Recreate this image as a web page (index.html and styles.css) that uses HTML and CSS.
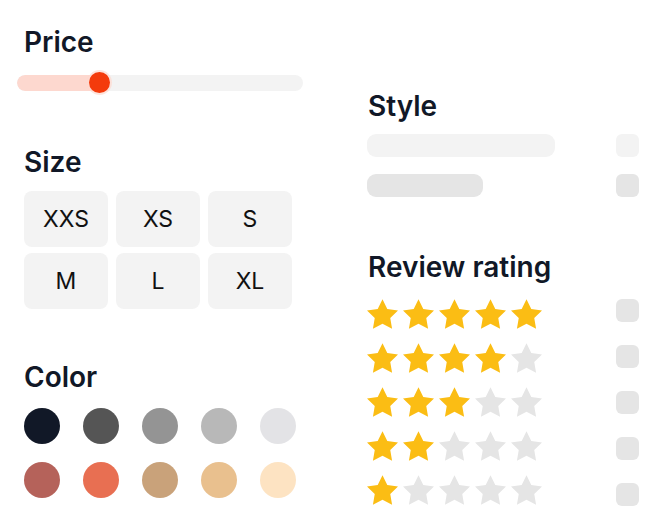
FILE: index.html
```html
<!DOCTYPE html>
<html>
<head>
<meta charset="utf-8">
<link rel="stylesheet" href="styles.css">
</head>
<body>
<div class="page">
  <div class="col left">
    <section class="sec price">
      <h2 class="title">Price</h2>
      <div class="slider">
        <div class="track"><div class="fill" style="width:82px"></div></div>
        <div class="thumb" style="left:72px"></div>
      </div>
    </section>
    <section class="sec size">
      <h2 class="title">Size</h2>
      <div class="sizes">
        <div class="size-btn">XXS</div>
        <div class="size-btn">XS</div>
        <div class="size-btn">S</div>
        <div class="size-btn">M</div>
        <div class="size-btn">L</div>
        <div class="size-btn">XL</div>
      </div>
    </section>
    <section class="sec color">
      <h2 class="title">Color</h2>
      <div class="swatches">
        <span class="sw c1"></span><span class="sw c2"></span><span class="sw c3"></span><span class="sw c4"></span><span class="sw c5"></span>
        <span class="sw c6"></span><span class="sw c7"></span><span class="sw c8"></span><span class="sw c9"></span><span class="sw c10"></span>
      </div>
    </section>
  </div>
  <div class="col right">
    <section class="sec style">
      <h2 class="title">Style</h2>
      <div class="opt-row"><span class="bar bar-long light"></span><span class="box light"></span></div>
      <div class="opt-row"><span class="bar bar-short"></span><span class="box"></span></div>
    </section>
    <section class="sec review">
      <h2 class="title">Review rating</h2>
      <div class="ratings">
        <div class="stars-col">
          <div class="stars" data-n="5">
            <svg class="star on" viewBox="2 2 20 19"><path d="M12 2l3.09 6.26L22 9.27l-5 4.87 1.18 6.88L12 17.770l-6.18 3.25L7 14.14 2 9.27l6.91-1.01L12 2z"/></svg>
            <svg class="star on" viewBox="2 2 20 19"><path d="M12 2l3.09 6.26L22 9.27l-5 4.87 1.18 6.88L12 17.77l-6.18 3.25L7 14.14 2 9.27l6.91-1.01L12 2z"/></svg>
            <svg class="star on" viewBox="2 2 20 19"><path d="M12 2l3.09 6.26L22 9.27l-5 4.87 1.18 6.88L12 17.77l-6.18 3.25L7 14.14 2 9.27l6.91-1.01L12 2z"/></svg>
            <svg class="star on" viewBox="2 2 20 19"><path d="M12 2l3.09 6.26L22 9.27l-5 4.87 1.18 6.88L12 17.77l-6.18 3.25L7 14.14 2 9.27l6.91-1.01L12 2z"/></svg>
            <svg class="star on" viewBox="2 2 20 19"><path d="M12 2l3.09 6.26L22 9.27l-5 4.87 1.18 6.88L12 17.77l-6.18 3.25L7 14.14 2 9.27l6.91-1.01L12 2z"/></svg>
          </div>
          <div class="stars">
            <svg class="star on" viewBox="2 2 20 19"><path d="M12 2l3.09 6.26L22 9.27l-5 4.87 1.18 6.88L12 17.77l-6.18 3.25L7 14.14 2 9.27l6.91-1.01L12 2z"/></svg>
            <svg class="star on" viewBox="2 2 20 19"><path d="M12 2l3.09 6.26L22 9.27l-5 4.87 1.18 6.88L12 17.77l-6.18 3.25L7 14.14 2 9.27l6.91-1.01L12 2z"/></svg>
            <svg class="star on" viewBox="2 2 20 19"><path d="M12 2l3.09 6.26L22 9.27l-5 4.87 1.18 6.88L12 17.77l-6.18 3.25L7 14.14 2 9.27l6.91-1.01L12 2z"/></svg>
            <svg class="star on" viewBox="2 2 20 19"><path d="M12 2l3.09 6.26L22 9.27l-5 4.87 1.18 6.88L12 17.77l-6.18 3.25L7 14.14 2 9.27l6.91-1.01L12 2z"/></svg>
            <svg class="star off" viewBox="2 2 20 19"><path d="M12 2l3.09 6.26L22 9.27l-5 4.87 1.18 6.88L12 17.77l-6.18 3.25L7 14.14 2 9.27l6.91-1.01L12 2z"/></svg>
          </div>
          <div class="stars">
            <svg class="star on" viewBox="2 2 20 19"><path d="M12 2l3.09 6.26L22 9.27l-5 4.87 1.18 6.88L12 17.77l-6.18 3.25L7 14.14 2 9.27l6.91-1.01L12 2z"/></svg>
            <svg class="star on" viewBox="2 2 20 19"><path d="M12 2l3.09 6.26L22 9.27l-5 4.87 1.18 6.88L12 17.77l-6.18 3.25L7 14.14 2 9.27l6.91-1.01L12 2z"/></svg>
            <svg class="star on" viewBox="2 2 20 19"><path d="M12 2l3.09 6.26L22 9.27l-5 4.87 1.18 6.88L12 17.77l-6.18 3.25L7 14.14 2 9.27l6.91-1.01L12 2z"/></svg>
            <svg class="star off" viewBox="2 2 20 19"><path d="M12 2l3.09 6.26L22 9.27l-5 4.87 1.18 6.88L12 17.77l-6.18 3.25L7 14.14 2 9.27l6.91-1.01L12 2z"/></svg>
            <svg class="star off" viewBox="2 2 20 19"><path d="M12 2l3.09 6.26L22 9.27l-5 4.87 1.18 6.88L12 17.77l-6.18 3.25L7 14.14 2 9.27l6.91-1.01L12 2z"/></svg>
          </div>
          <div class="stars">
            <svg class="star on" viewBox="2 2 20 19"><path d="M12 2l3.09 6.26L22 9.27l-5 4.87 1.18 6.88L12 17.77l-6.18 3.25L7 14.14 2 9.27l6.91-1.01L12 2z"/></svg>
            <svg class="star on" viewBox="2 2 20 19"><path d="M12 2l3.09 6.26L22 9.27l-5 4.87 1.18 6.88L12 17.77l-6.18 3.25L7 14.14 2 9.27l6.91-1.01L12 2z"/></svg>
            <svg class="star off" viewBox="2 2 20 19"><path d="M12 2l3.09 6.26L22 9.27l-5 4.87 1.18 6.88L12 17.77l-6.18 3.25L7 14.14 2 9.27l6.91-1.01L12 2z"/></svg>
            <svg class="star off" viewBox="2 2 20 19"><path d="M12 2l3.09 6.26L22 9.27l-5 4.87 1.18 6.88L12 17.77l-6.18 3.25L7 14.14 2 9.27l6.91-1.01L12 2z"/></svg>
            <svg class="star off" viewBox="2 2 20 19"><path d="M12 2l3.09 6.26L22 9.27l-5 4.87 1.18 6.88L12 17.77l-6.18 3.25L7 14.14 2 9.27l6.91-1.01L12 2z"/></svg>
          </div>
          <div class="stars">
            <svg class="star on" viewBox="2 2 20 19"><path d="M12 2l3.09 6.26L22 9.27l-5 4.87 1.18 6.88L12 17.77l-6.18 3.25L7 14.14 2 9.27l6.91-1.01L12 2z"/></svg>
            <svg class="star off" viewBox="2 2 20 19"><path d="M12 2l3.09 6.26L22 9.27l-5 4.87 1.18 6.88L12 17.77l-6.18 3.25L7 14.14 2 9.27l6.91-1.01L12 2z"/></svg>
            <svg class="star off" viewBox="2 2 20 19"><path d="M12 2l3.09 6.26L22 9.27l-5 4.87 1.18 6.88L12 17.77l-6.18 3.25L7 14.14 2 9.27l6.91-1.01L12 2z"/></svg>
            <svg class="star off" viewBox="2 2 20 19"><path d="M12 2l3.09 6.26L22 9.27l-5 4.87 1.18 6.88L12 17.77l-6.18 3.25L7 14.14 2 9.27l6.91-1.01L12 2z"/></svg>
            <svg class="star off" viewBox="2 2 20 19"><path d="M12 2l3.09 6.26L22 9.27l-5 4.87 1.18 6.88L12 17.77l-6.18 3.25L7 14.14 2 9.27l6.91-1.01L12 2z"/></svg>
          </div>
        </div>
        <div class="checks-col">
          <span class="box"></span>
          <span class="box"></span>
          <span class="box"></span>
          <span class="box"></span>
          <span class="box"></span>
        </div>
      </div>
    </section>
  </div>
</div>
</body>
</html>
```
FILE: styles.css
```css
* { box-sizing: border-box; margin: 0; padding: 0; }
html, body { background: #fff; }
body {
  font-family: Inter, "Noto Sans", sans-serif;
  color: #111827;
  width: 664px;
  height: 530px;
  overflow: hidden;
}
.page {
  display: flex;
  gap: 76px;
  padding: 0 0 0 24px;
}
.col { display: flex; flex-direction: column; }
.left { width: 268px; padding-top: 26px; }
.right { width: 271px; padding-top: 90px; }

.title {
  font-size: 28px;
  line-height: 32px;
  font-weight: 600;
  color: #111827;
}

/* slider */
.slider {
  position: relative;
  margin: 14px -11px 0 -7px;
  height: 22px;
  display: flex;
  align-items: center;
}
.track {
  width: 100%;
  height: 16px;
  border-radius: 8px;
  background: #f3f3f3;
  overflow: hidden;
}
.fill {
  height: 100%;
  background: #fdd8cf;
  border-radius: 8px 0 0 8px;
}
.thumb {
  position: absolute;
  top: 0;
  width: 21px;
  height: 21px;
  border-radius: 50%;
  background: #f43b0c;
  box-shadow: 0 0 0 2px rgba(253, 216, 207, 0.7);
}

/* size */
.size { margin-top: 52px; }
.sizes {
  margin-top: 13px;
  display: grid;
  grid-template-columns: repeat(3, 84px);
  grid-auto-rows: 56px;
  column-gap: 8px;
  row-gap: 6px;
}
.size-btn {
  background: #f3f3f3;
  border-radius: 8px;
  display: flex;
  align-items: center;
  justify-content: center;
  font-size: 23px;
  font-weight: 400;
  color: #111;
}

/* color */
.color { margin-top: 52px; }
.swatches {
  margin-top: 15px;
  display: grid;
  grid-template-columns: repeat(5, 36px);
  grid-auto-rows: 36px;
  column-gap: 23px;
  row-gap: 18px;
}
.sw { display: block; border-radius: 50%; }
.c1 { background: #111827; }
.c2 { background: #555555; }
.c3 { background: #949494; }
.c4 { background: #b8b8b8; }
.c5 { background: #e3e3e6; }
.c6 { background: #b5625a; }
.c7 { background: #e86f52; }
.c8 { background: #c9a27a; }
.c9 { background: #e9c08e; }
.c10 { background: #fde3c2; }

/* style */
.opt-row {
  display: flex;
  justify-content: space-between;
  align-items: center;
  margin-top: 17px;
  margin-left: -1px;
}
.style .title + .opt-row { margin-top: 12px; }
.bar {
  display: block;
  height: 23px;
  border-radius: 9px;
  background: #e5e5e5;
}
.bar-long { width: 188px; }
.bar-short { width: 116px; }
.box {
  display: block;
  width: 23px;
  height: 23px;
  border-radius: 6px;
  background: #e5e5e5;
}
.light { background: #f3f3f3; }

/* review */
.review { margin-top: 54px; }
.ratings {
  margin-top: 16px;
  display: flex;
  justify-content: space-between;
  margin-left: -1px;
}
.stars-col { display: flex; flex-direction: column; gap: 14px; }
.stars { display: flex; gap: 5px; height: 30px; }
.star { width: 31px; height: 30px; display: block; }
.star.on { fill: #fbbd14; }
.star.off { fill: #e5e5e5; }
.checks-col { display: flex; flex-direction: column; gap: 23px; }
```
